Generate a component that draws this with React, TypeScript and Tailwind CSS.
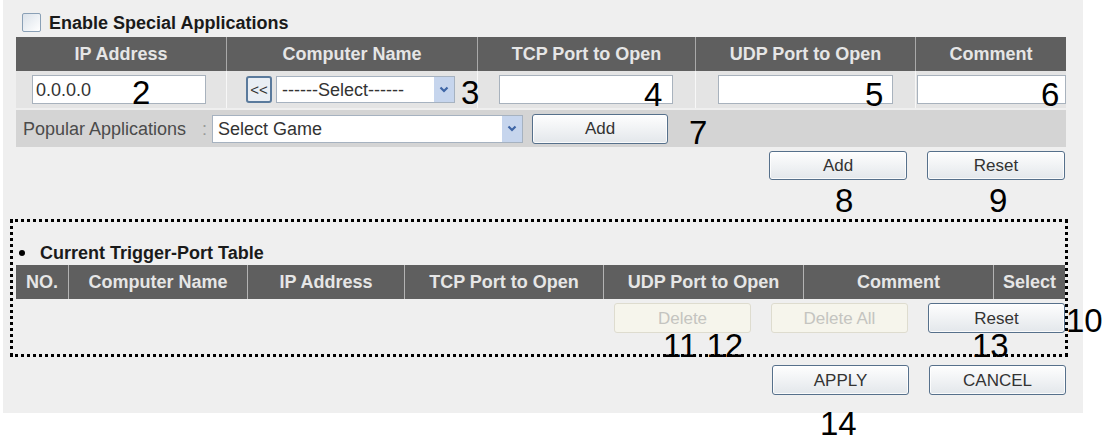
import React from "react";

const BTN =
  "flex items-center justify-center rounded-[3px] border border-[#56708b] bg-linear-to-b from-[#fefefe] to-[#e3e7eb] text-[17px] leading-none text-[#333] shadow-[inset_0_0_0_1px_rgba(255,255,255,0.8)]";
const BTN_OFF =
  "flex items-center justify-center rounded-[3px] border border-[#dedccf] bg-[#f6f5ec] text-[17px] leading-none text-[#c4c4c0]";
const INPUT = "h-[29px] border border-[#a8b2bd] bg-white";

function Chevron() {
  return (
    <svg width="10" height="7" viewBox="0 0 10 7" aria-hidden="true">
      <path d="M1.5 1.5 5 5l3.5-3.5" stroke="#3e65a6" strokeWidth="2.2" fill="none" />
    </svg>
  );
}

function FakeSelect({ label, className }: { label: string; className: string }) {
  return (
    <div className={`flex border border-[#a6b2c0] bg-white ${className}`}>
      <span className="flex-1 self-center truncate pl-[5px] text-[18px] leading-none text-[#333]">
        {label}
      </span>
      <span className="flex w-[20px] items-center justify-center bg-[#c6d5ed]">
        <Chevron />
      </span>
    </div>
  );
}

const TOP_HEAD = ["IP Address", "Computer Name", "TCP Port to Open", "UDP Port to Open", "Comment"];
const TRIGGER_HEAD = [
  "NO.",
  "Computer Name",
  "IP Address",
  "TCP Port to Open",
  "UDP Port to Open",
  "Comment",
  "Select",
];

export default function App() {
  return (
    <div className="relative h-[443px] w-[1103px] overflow-hidden bg-white font-['Liberation_Sans',Arial,sans-serif] text-[#222]">
      <div className="ml-[3px] h-[413px] w-[1080px] bg-[#efefef] pl-[13px] pr-[17px] pt-[13px]">
        {/* Enable checkbox */}
        <div className="flex h-[19px] items-center">
          <span className="ml-[6px] h-[19px] w-[19px] rounded-[2px] border border-[#8aa0b6] bg-linear-to-br from-[#dbe2ea] to-white" />
          <span className="ml-[8px] text-[18px] font-bold leading-none text-[#1a1a1a]">
            Enable Special Applications
          </span>
        </div>

        {/* Special application entry table */}
        <div className="mt-[5px] grid grid-cols-[210px_251px_218px_220px_151px]">
          {TOP_HEAD.map((h, i) => (
            <div
              key={h}
              className={`flex h-[34px] items-center justify-center bg-[#5f5f5f] text-[18px] font-bold text-[#e6e6e6] ${
                i > 0 ? "border-l border-[#a9a9a9]" : ""
              }`}
            >
              {h}
            </div>
          ))}

          <div className="flex h-[37px] items-center bg-[#e4e4e4] pl-[16px]">
            <div className={`${INPUT} flex w-[174px] items-center pl-[3px] text-[18px] leading-none text-[#333]`}>
              0.0.0.0
            </div>
          </div>
          <div className="flex h-[37px] items-center border-l border-[#f7f7f7] bg-[#e4e4e4] pl-[19px]">
            <span className="flex h-[27px] w-[26px] items-center justify-center rounded-[3px] border-2 border-[#5a7a9c] bg-[#e9eef4] text-[15px] leading-none text-[#333]">
              &lt;&lt;
            </span>
            <FakeSelect label="------Select------" className="ml-[4px] h-[27px] w-[179px]" />
          </div>
          <div className="flex h-[37px] items-center border-l border-[#f7f7f7] bg-[#e4e4e4] pl-[21px]">
            <div className={`${INPUT} w-[174px]`} />
          </div>
          <div className="flex h-[37px] items-center border-l border-[#f7f7f7] bg-[#e4e4e4] pl-[22px]">
            <div className={`${INPUT} w-[175px]`} />
          </div>
          <div className="flex h-[37px] items-center border-l border-[#f7f7f7] bg-[#e4e4e4] pl-[1px]">
            <div className={`${INPUT} w-[149px]`} />
          </div>
        </div>

        {/* Popular applications */}
        <div className="mt-[2px] flex h-[37px] items-center bg-[#d4d4d4] pl-[7px]">
          <span className="w-[179px] text-[18px] leading-none text-[#4b4b4b]">Popular Applications</span>
          <span className="w-[10px] text-[18px] leading-none text-[#9a9a9a]">:</span>
          <FakeSelect label="Select Game" className="h-[28px] w-[311px]" />
          <button className={`${BTN} ml-[9px] h-[30px] w-[136px]`}>Add</button>
        </div>

        <div className="mt-[4px] flex justify-end gap-[20px] pr-[1px]">
          <button className={`${BTN} h-[29px] w-[138px]`}>Add</button>
          <button className={`${BTN} h-[29px] w-[138px]`}>Reset</button>
        </div>

        {/* Current trigger-port table */}
        <div className="-ml-[6px] -mr-[2px] mt-[39px] border-[3px] border-dotted border-black pb-[21px] pl-[3px] pt-[21px]">
          <div className="flex h-[20px] items-center">
            <span className="ml-[3px] h-[6px] w-[6px] rounded-full bg-black" />
            <span className="ml-[15px] text-[18px] font-bold leading-[20px] text-[#1a1a1a]">
              Current Trigger-Port Table
            </span>
          </div>
          <div className="mt-[2px] grid grid-cols-[52px_179px_157px_199px_200px_190px_72px]">
            {TRIGGER_HEAD.map((h, i) => (
              <div
                key={h + i}
                className={`flex h-[34px] items-center justify-center bg-[#5f5f5f] text-[18px] font-bold text-[#e6e6e6] ${
                  i > 0 ? "border-l border-[#b3b3b3]" : ""
                }`}
              >
                {h}
              </div>
            ))}
          </div>
          <div className="mt-[4px] flex justify-end gap-[20px]">
            <button className={`${BTN_OFF} h-[30px] w-[137px]`}>Delete</button>
            <button className={`${BTN_OFF} h-[30px] w-[137px]`}>Delete All</button>
            <button className={`${BTN} h-[30px] w-[137px]`}>Reset</button>
          </div>
        </div>

        <div className="mt-[8px] flex justify-end gap-[20px]">
          <button className={`${BTN} h-[30px] w-[137px]`}>APPLY</button>
          <button className={`${BTN} h-[30px] w-[137px]`}>CANCEL</button>
        </div>
      </div>

      {/* Callout numbers */}
      <span className="absolute left-[132px] top-[76px] text-[33px] leading-none text-black">2</span>
      <span className="absolute left-[461px] top-[76px] text-[33px] leading-none text-black">3</span>
      <span className="absolute left-[644px] top-[78px] text-[33px] leading-none text-black">4</span>
      <span className="absolute left-[865px] top-[78px] text-[33px] leading-none text-black">5</span>
      <span className="absolute left-[1041px] top-[78px] text-[33px] leading-none text-black">6</span>
      <span className="absolute left-[689px] top-[116px] text-[33px] leading-none text-black">7</span>
      <span className="absolute left-[835px] top-[184px] text-[33px] leading-none text-black">8</span>
      <span className="absolute left-[989px] top-[184px] text-[33px] leading-none text-black">9</span>
      <span className="absolute left-[1066px] top-[304px] text-[33px] leading-none text-black">10</span>
      <span className="absolute left-[663px] top-[329px] text-[33px] leading-none text-black">11 12</span>
      <span className="absolute left-[972px] top-[329px] text-[33px] leading-none text-black">13</span>
      <span className="absolute left-[820px] top-[407px] text-[33px] leading-none text-black">14</span>
    </div>
  );
}
